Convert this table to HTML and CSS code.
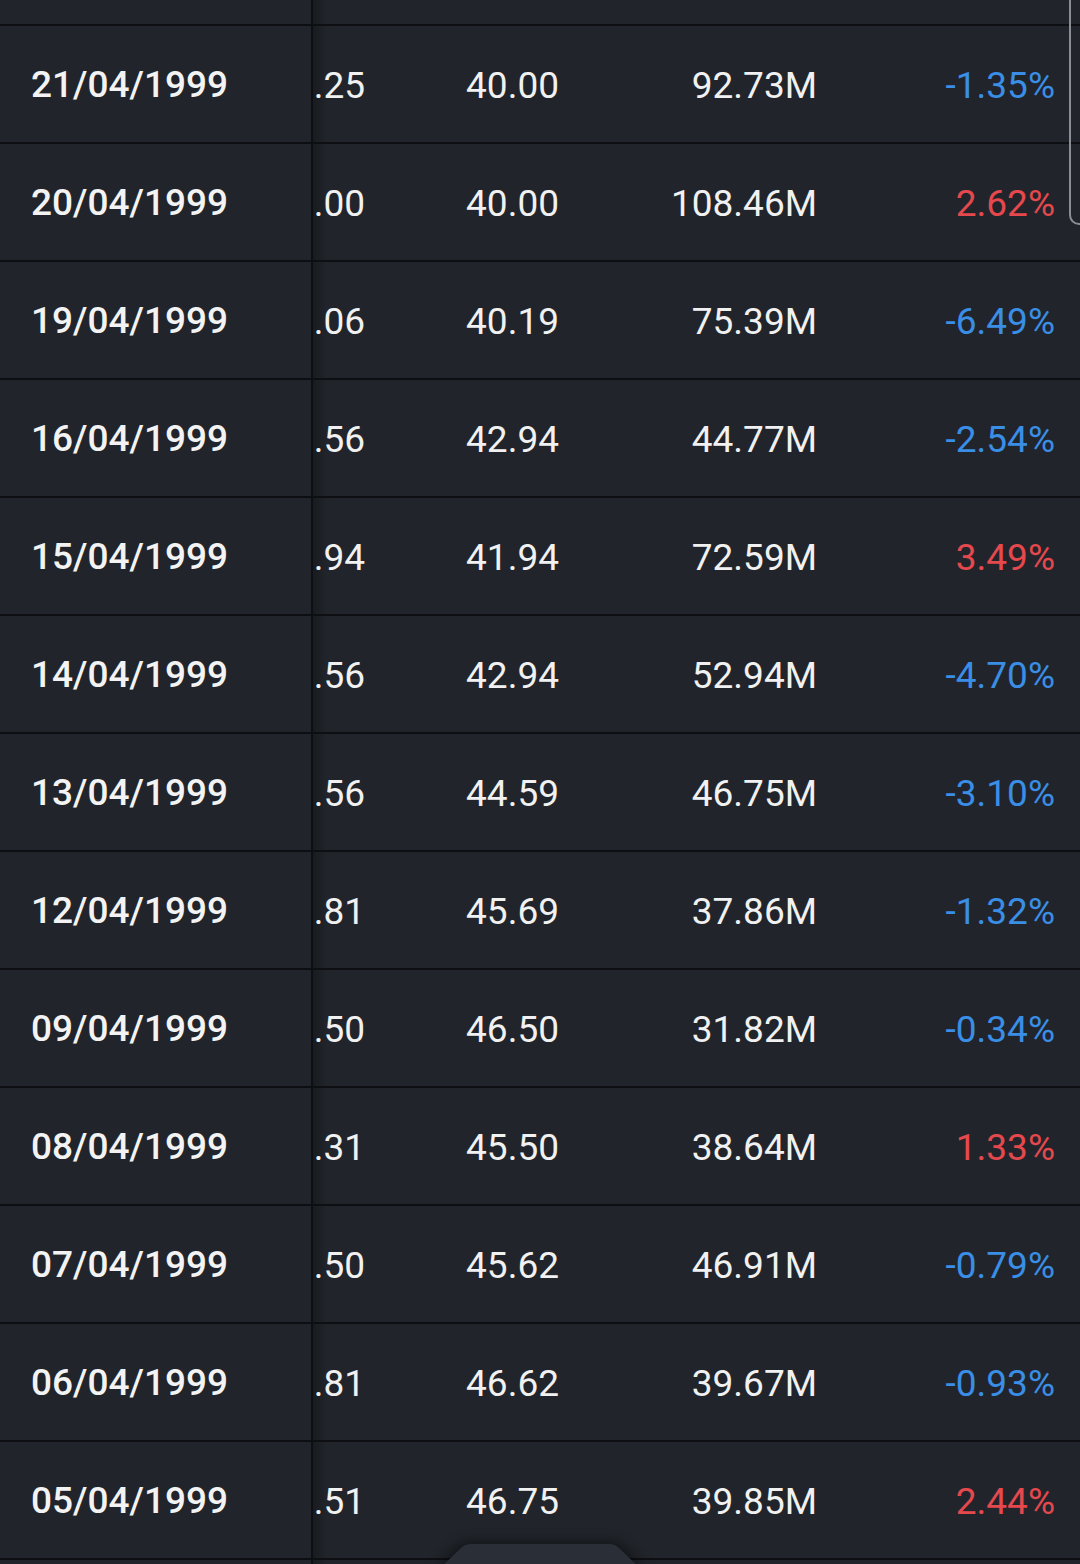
FILE: index.html
```html
<!DOCTYPE html>
<html>
<head>
<meta charset="utf-8">
<link rel="stylesheet" href="styles.css">
</head>
<body>
<div class="table">
  <div class="row partial"><div class="date"></div><div></div><div></div><div></div><div></div><div></div></div>
  <div class="row"><div class="date">21/04/1999</div><div class="num">.25</div><div class="num">40.00</div><div class="num">92.73M</div><div class="num down">-1.35%</div><div></div></div>
  <div class="row"><div class="date">20/04/1999</div><div class="num">.00</div><div class="num">40.00</div><div class="num">108.46M</div><div class="num up">2.62%</div><div></div></div>
  <div class="row"><div class="date">19/04/1999</div><div class="num">.06</div><div class="num">40.19</div><div class="num">75.39M</div><div class="num down">-6.49%</div><div></div></div>
  <div class="row"><div class="date">16/04/1999</div><div class="num">.56</div><div class="num">42.94</div><div class="num">44.77M</div><div class="num down">-2.54%</div><div></div></div>
  <div class="row"><div class="date">15/04/1999</div><div class="num">.94</div><div class="num">41.94</div><div class="num">72.59M</div><div class="num up">3.49%</div><div></div></div>
  <div class="row"><div class="date">14/04/1999</div><div class="num">.56</div><div class="num">42.94</div><div class="num">52.94M</div><div class="num down">-4.70%</div><div></div></div>
  <div class="row"><div class="date">13/04/1999</div><div class="num">.56</div><div class="num">44.59</div><div class="num">46.75M</div><div class="num down">-3.10%</div><div></div></div>
  <div class="row"><div class="date">12/04/1999</div><div class="num">.81</div><div class="num">45.69</div><div class="num">37.86M</div><div class="num down">-1.32%</div><div></div></div>
  <div class="row"><div class="date">09/04/1999</div><div class="num">.50</div><div class="num">46.50</div><div class="num">31.82M</div><div class="num down">-0.34%</div><div></div></div>
  <div class="row"><div class="date">08/04/1999</div><div class="num">.31</div><div class="num">45.50</div><div class="num">38.64M</div><div class="num up">1.33%</div><div></div></div>
  <div class="row"><div class="date">07/04/1999</div><div class="num">.50</div><div class="num">45.62</div><div class="num">46.91M</div><div class="num down">-0.79%</div><div></div></div>
  <div class="row"><div class="date">06/04/1999</div><div class="num">.81</div><div class="num">46.62</div><div class="num">39.67M</div><div class="num down">-0.93%</div><div></div></div>
  <div class="row"><div class="date">05/04/1999</div><div class="num">.51</div><div class="num">46.75</div><div class="num">39.85M</div><div class="num up">2.44%</div><div></div></div>
  <div class="row tail"><div class="date"></div><div></div><div></div><div></div><div></div><div></div></div>
</div>
<div class="scrollbar"></div>
<svg class="handle" width="240" height="44" viewBox="0 0 240 44">
  <defs>
    <filter id="sh" x="-20%" y="-60%" width="140%" height="220%">
      <feGaussianBlur stdDeviation="7"/>
    </filter>
  </defs>
  <path d="M16 48 L38 27 Q42 23 48 23 L192 23 Q198 23 202 27 L224 48 Z" fill="#000" opacity="0.55" filter="url(#sh)"/>
  <path d="M20 48 L41 28 Q45 24 51 24 L189 24 Q195 24 199 28 L220 48 Z" fill="#2a2f37"/>
</svg>
</body>
</html>
```
FILE: styles.css
```css
html, body {
  margin: 0;
  padding: 0;
  background: #21252b;
  overflow: hidden;
}
body {
  width: 1080px;
  height: 1564px;
  position: relative;
  font-family: Roboto, "Noto Sans", sans-serif;
  font-size: 37px;
  color: #f1f1f1;
}
.table {
  display: flex;
  flex-direction: column;
  height: 1564px;
  overflow: hidden;
}
.row {
  display: grid;
  grid-template-columns: 313px 52px 194px 258px 238px 25px;
  height: 116px;
  flex: none;
  border-bottom: 2px solid #0d0f12;
}
.row > div {
  display: flex;
  align-items: center;
  white-space: nowrap;
}
.row.partial {
  height: 24px;
}
.row.tail {
  height: 10px;
}
.row > .date {
  border-right: 2px solid #0d0f12;
  padding-left: 31px;
  font-weight: 500;
  color: #f3f3f3;
}
.row > .date + div {
  background: linear-gradient(to right, rgba(0,0,0,0.28), rgba(0,0,0,0) 14px);
}
.row > .num {
  justify-content: flex-end;
  padding-top: 2px;
}
.row > .down { color: #3a8ee6; }
.row > .up { color: #e5484d; }
.scrollbar {
  position: absolute;
  left: 1069px;
  top: -12px;
  width: 30px;
  height: 237px;
  border: 2px solid #8a8e93;
  border-radius: 10px;
  box-sizing: border-box;
}
.handle {
  position: absolute;
  left: 420px;
  top: 1520px;
  display: block;
}
```
